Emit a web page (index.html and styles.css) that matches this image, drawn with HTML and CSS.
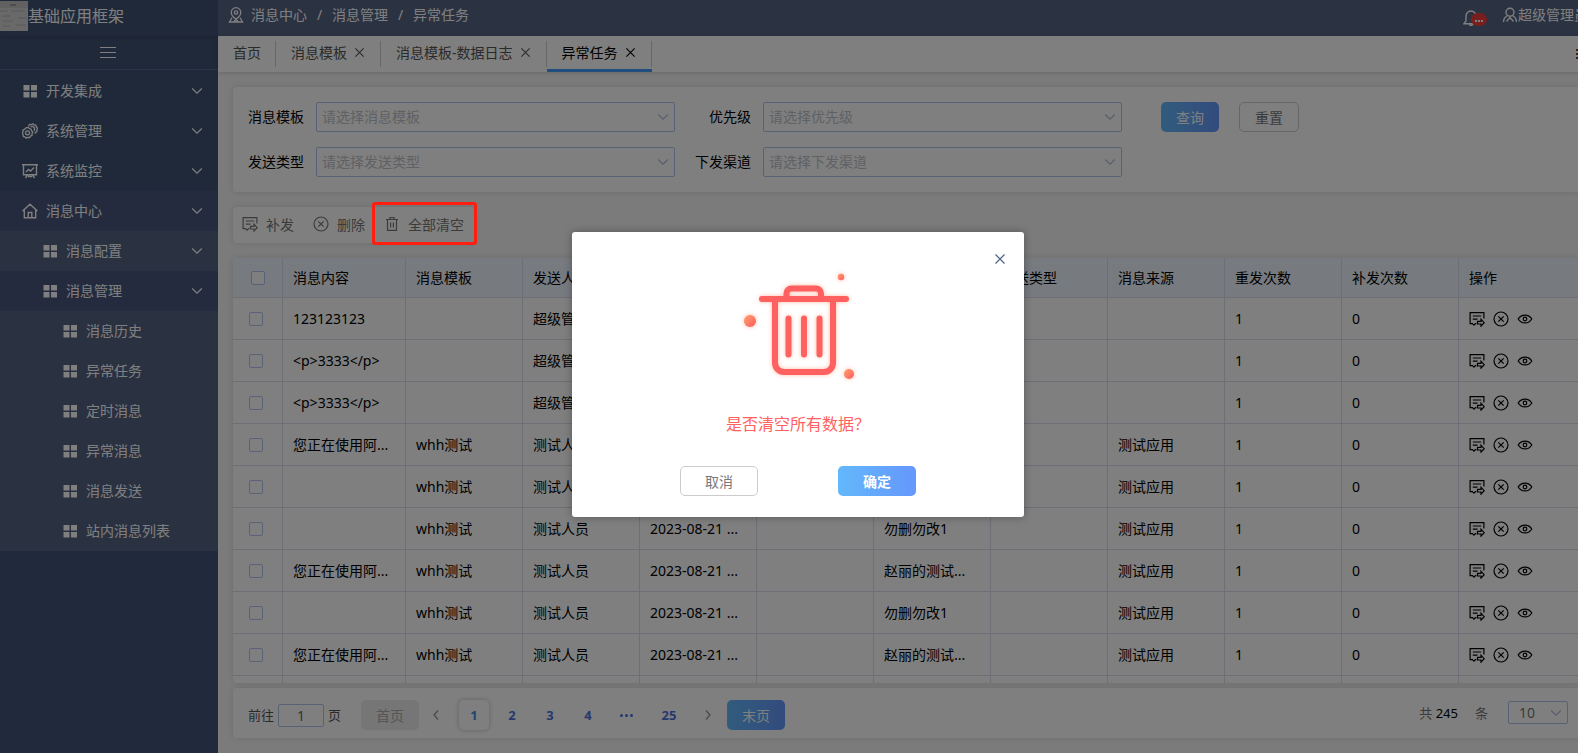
FILE: index.html
```html
<!DOCTYPE html>
<html lang="zh-CN">
<head>
<meta charset="utf-8">
<title>基础应用框架</title>
<link rel="stylesheet" href="styles.css">
</head>
<body>
<svg class="sprite" aria-hidden="true">
  <symbol id="i-grid" viewBox="0 0 16 16"><path fill="currentColor" d="M1.500 2h6v5.500h-6zM9 2h6v5.500H9zM1.500 9h6v5.500h-6zM9 9h6v5.500H9z"/></symbol>
  <symbol id="i-gear" viewBox="0 0 16 16"><g fill="none" stroke="currentColor" stroke-width="1.300" stroke-linejoin="round"><path d="M4.600 4.600l1.700-.2 1.100 1.300 1.700.4.400 1.700 1.300 1.200-.8 1.600.1 1.700-1.600.8-.9 1.500-1.800-.2-1.600.8-1.200-1.300-1.700-.4-.2-1.800-1-1.400.9-1.500-.1-1.700 1.600-.8z"/><circle cx="5.500" cy="9.800" r="2"/><path d="M6.500 3.300L7.500 1.500l1.800.2 1.600-1 1.300 1.300 1.700.2.400 1.800 1.300 1.200-.8 1.600.3 1.700-1.500.9-.8 1.200M8.500 4c1.200-.8 2.700-.6 3.500.5.800 1.100.7 2.500 0 3.500"/></g></symbol>
  <symbol id="i-board" viewBox="0 0 16 16"><g fill="none" stroke="currentColor" stroke-width="1.400"><path d="M0 1.700h16M1.500 1.700v10h13v-10M4 9l2.500-2.500 2 1.500L12 4.500M5.500 12l-2 3M10.500 12l2 3M6 13.500h4"/></g></symbol>
  <symbol id="i-home" viewBox="0 0 16 16"><g fill="none" stroke="currentColor" stroke-width="1.400"><path d="M.6 8L8 1.200 15.400 8M2.300 7v7.800h11.400V7M6.200 14.500V9.500h3.600v5"/></g></symbol>
  <symbol id="i-down" viewBox="0 0 12 12"><path fill="none" stroke="currentColor" stroke-width="1.200" d="M1.200 3.500L6 8.200l4.800-4.700"/></symbol>
  <symbol id="i-left" viewBox="0 0 12 12"><path fill="none" stroke="currentColor" stroke-width="1.400" d="M8 1.500L4 6l4 4.500"/></symbol>
  <symbol id="i-right" viewBox="0 0 12 12"><path fill="none" stroke="currentColor" stroke-width="1.400" d="M4 1.500L8 6l-4 4.500"/></symbol>
  <symbol id="i-x" viewBox="0 0 12 12"><path fill="none" stroke="currentColor" stroke-width="1.200" d="M1.500 1.500l9 9M10.500 1.500l-9 9"/></symbol>
  <symbol id="i-pin" viewBox="0 0 16 16"><g fill="none" stroke="currentColor" stroke-width="1.300"><path d="M8 12.300C5 10 3.200 8 3.200 5.500a4.800 4.800 0 0 1 9.600 0C12.800 8 11 10 8 12.300z"/><circle cx="8" cy="5.500" r="1.700"/><path d="M4 10.500L1.500 15h13L12 10.500M5.500 15L8 12.500l2.500 2.500"/></g></symbol>
  <symbol id="i-bell" viewBox="0 0 16 16"><path fill="none" stroke="currentColor" stroke-width="1.400" d="M.8 13.800h14.400L13 11V6a5 5 0 0 0-10 0v5zM6.500 14.300c.3 1.500 2.700 1.500 3 0"/></symbol>
  <symbol id="i-user" viewBox="0 0 16 16"><path fill="none" stroke="currentColor" stroke-width="1.400" d="M8 1.200a4 4 0 0 1 4 4c0 2.300-1.800 4-4 4s-4-1.700-4-4a4 4 0 0 1 4-4zM5.500 8.500C3 10 1.500 12 1.500 15M10.500 8.500c2.500 1.500 4 3.500 4 6.500M4.500 14.500L8 10.500l3.500 4"/></symbol>
  <symbol id="i-resend" viewBox="0 0 16 16"><path fill="none" stroke="currentColor" stroke-width="1.200" d="M14.900 7.500V1.600H1.100v11h2.400L5 14.200l1.500-1.600h.8M3.800 5h8.400M3.800 8.200h4.700M12 8.200v2.100H8.500v2.700H12v2.100l3.200-3.400z"/></symbol>
  <symbol id="i-cancel" viewBox="0 0 16 16"><g fill="none" stroke="currentColor" stroke-width="1.200"><circle cx="8" cy="8" r="7"/><path d="M5.300 5.300l5.400 5.400M10.700 5.300l-5.400 5.400"/></g></symbol>
  <symbol id="i-eye" viewBox="0 0 16 16"><g fill="none" stroke="currentColor" stroke-width="1.200"><path d="M1.200 8c3.200-5.200 10.400-5.200 13.600 0-3.200 5.200-10.400 5.200-13.600 0z"/><circle cx="8" cy="8" r="1.800"/></g></symbol>
  <symbol id="i-trash" viewBox="0 0 16 16"><path fill="none" stroke="currentColor" stroke-width="1.200" d="M2 3.500h12M6 3.200V1.500h4v1.700M3.500 3.500v10.900h9V3.500M6.600 6.500v5M9.400 6.500v5"/></symbol>
</svg>

<div class="app">
  <aside class="sidebar">
    <div class="brand">
      <svg class="logo" viewBox="0 0 28 30" preserveAspectRatio="none" aria-hidden="true"><rect width="28" height="30" fill="#d2d2d2"/><rect width="28" height="7" fill="#c2c2c2"/><path d="M10 4h6" stroke="#9a9a9a" stroke-width="2"/><path d="M0 10h8M11 10h14M2 15h9M3 20h10M18 17h9M2 25h8M16 24h10" stroke="#b4b4b4"/></svg>
      <span>基础应用框架</span>
    </div>
    <button class="burger" aria-label="折叠菜单"><span></span><span></span><span></span></button>
    <nav class="menu">
      <a class="item" href="#"><svg><use href="#i-grid"/></svg><span>开发集成</span><svg class="arrow"><use href="#i-down"/></svg></a>
      <a class="item" href="#"><svg><use href="#i-gear"/></svg><span>系统管理</span><svg class="arrow"><use href="#i-down"/></svg></a>
      <a class="item" href="#"><svg><use href="#i-board"/></svg><span>系统监控</span><svg class="arrow"><use href="#i-down"/></svg></a>
      <a class="item open" href="#"><svg><use href="#i-home"/></svg><span>消息中心</span><svg class="arrow"><use href="#i-down"/></svg></a>
      <div class="submenu">
        <a class="item level2" href="#"><svg><use href="#i-grid"/></svg><span>消息配置</span><svg class="arrow"><use href="#i-down"/></svg></a>
        <a class="item level2 open" href="#"><svg><use href="#i-grid"/></svg><span>消息管理</span><svg class="arrow"><use href="#i-down"/></svg></a>
        <a class="item level3" href="#"><svg><use href="#i-grid"/></svg><span>消息历史</span></a>
        <a class="item level3" href="#"><svg><use href="#i-grid"/></svg><span>异常任务</span></a>
        <a class="item level3" href="#"><svg><use href="#i-grid"/></svg><span>定时消息</span></a>
        <a class="item level3" href="#"><svg><use href="#i-grid"/></svg><span>异常消息</span></a>
        <a class="item level3" href="#"><svg><use href="#i-grid"/></svg><span>消息发送</span></a>
        <a class="item level3" href="#"><svg><use href="#i-grid"/></svg><span>站内消息列表</span></a>
      </div>
    </nav>
  </aside>

  <div class="main">
    <header class="topbar">
      <nav class="crumbs">
        <svg><use href="#i-pin"/></svg>
        <a href="#">消息中心</a><i>/</i><a href="#">消息管理</a><i>/</i><span>异常任务</span>
      </nav>
      <div class="account">
        <button class="bell" aria-label="通知"><svg><use href="#i-bell"/></svg><span class="badge"><b></b><b></b><b></b></span></button>
        <a class="user" href="#"><svg><use href="#i-user"/></svg>超级管理员</a>
      </div>
    </header>

    <div class="tabs">
      <a class="tab" href="#">首页</a>
      <a class="tab" href="#">消息模板<svg><use href="#i-x"/></svg></a>
      <a class="tab" href="#">消息模板-数据日志<svg><use href="#i-x"/></svg></a>
      <a class="tab active" href="#">异常任务<svg><use href="#i-x"/></svg></a>
      <button class="tabs-more" aria-label="更多"><span></span><span></span><span></span></button>
    </div>

    <main class="content">
      <form class="panel search">
        <label for="f-tpl">消息模板</label>
        <div class="select"><select id="f-tpl"><option>请选择消息模板</option></select><svg><use href="#i-down"/></svg></div>
        <label for="f-pri">优先级</label>
        <div class="select"><select id="f-pri"><option>请选择优先级</option></select><svg><use href="#i-down"/></svg></div>
        <div class="actions"><button type="button" class="btn primary">查询</button><button type="button" class="btn plain">重置</button></div>
        <label for="f-type">发送类型</label>
        <div class="select"><select id="f-type"><option>请选择发送类型</option></select><svg><use href="#i-down"/></svg></div>
        <label for="f-chan">下发渠道</label>
        <div class="select"><select id="f-chan"><option>请选择下发渠道</option></select><svg><use href="#i-down"/></svg></div>
      </form>

      <div class="panel toolbar">
        <button><svg><use href="#i-resend"/></svg>补发</button>
        <button><svg><use href="#i-cancel"/></svg>删除</button>
        <button class="clear-all"><svg><use href="#i-trash"/></svg>全部清空<span class="marker"></span></button>
      </div>

      <div class="panel table-wrap">
        <table>
          <colgroup><col class="c-check"><col class="c-wide"><col><col><col><col><col><col><col><col><col><col class="c-ops"></colgroup>
          <thead>
            <tr><th><input type="checkbox" aria-label="全选"></th><th>消息内容</th><th>消息模板</th><th>发送人</th><th>发送时间</th><th>优先级</th><th>接收人</th><th>发送类型</th><th>消息来源</th><th>重发次数</th><th>补发次数</th><th>操作</th></tr>
          </thead>
          <tbody>
            <tr><td><input type="checkbox" aria-label="选择"></td><td>123123123</td><td></td><td>超级管理员</td><td></td><td></td><td></td><td></td><td></td><td>1</td><td>0</td><td><div class="ops"><button aria-label="补发"><svg><use href="#i-resend"/></svg></button><button aria-label="删除"><svg><use href="#i-cancel"/></svg></button><button aria-label="查看"><svg><use href="#i-eye"/></svg></button></div></td></tr>
            <tr><td><input type="checkbox" aria-label="选择"></td><td>&lt;p&gt;3333&lt;/p&gt;</td><td></td><td>超级管理员</td><td></td><td></td><td></td><td></td><td></td><td>1</td><td>0</td><td><div class="ops"><button aria-label="补发"><svg><use href="#i-resend"/></svg></button><button aria-label="删除"><svg><use href="#i-cancel"/></svg></button><button aria-label="查看"><svg><use href="#i-eye"/></svg></button></div></td></tr>
            <tr><td><input type="checkbox" aria-label="选择"></td><td>&lt;p&gt;3333&lt;/p&gt;</td><td></td><td>超级管理员</td><td></td><td></td><td></td><td></td><td></td><td>1</td><td>0</td><td><div class="ops"><button aria-label="补发"><svg><use href="#i-resend"/></svg></button><button aria-label="删除"><svg><use href="#i-cancel"/></svg></button><button aria-label="查看"><svg><use href="#i-eye"/></svg></button></div></td></tr>
            <tr><td><input type="checkbox" aria-label="选择"></td><td>您正在使用阿...</td><td>whh测试</td><td>测试人员</td><td></td><td></td><td></td><td></td><td>测试应用</td><td>1</td><td>0</td><td><div class="ops"><button aria-label="补发"><svg><use href="#i-resend"/></svg></button><button aria-label="删除"><svg><use href="#i-cancel"/></svg></button><button aria-label="查看"><svg><use href="#i-eye"/></svg></button></div></td></tr>
            <tr><td><input type="checkbox" aria-label="选择"></td><td></td><td>whh测试</td><td>测试人员</td><td></td><td></td><td></td><td></td><td>测试应用</td><td>1</td><td>0</td><td><div class="ops"><button aria-label="补发"><svg><use href="#i-resend"/></svg></button><button aria-label="删除"><svg><use href="#i-cancel"/></svg></button><button aria-label="查看"><svg><use href="#i-eye"/></svg></button></div></td></tr>
            <tr><td><input type="checkbox" aria-label="选择"></td><td></td><td>whh测试</td><td>测试人员</td><td>2023-08-21 ...</td><td></td><td>勿删勿改1</td><td></td><td>测试应用</td><td>1</td><td>0</td><td><div class="ops"><button aria-label="补发"><svg><use href="#i-resend"/></svg></button><button aria-label="删除"><svg><use href="#i-cancel"/></svg></button><button aria-label="查看"><svg><use href="#i-eye"/></svg></button></div></td></tr>
            <tr><td><input type="checkbox" aria-label="选择"></td><td>您正在使用阿...</td><td>whh测试</td><td>测试人员</td><td>2023-08-21 ...</td><td></td><td>赵丽的测试...</td><td></td><td>测试应用</td><td>1</td><td>0</td><td><div class="ops"><button aria-label="补发"><svg><use href="#i-resend"/></svg></button><button aria-label="删除"><svg><use href="#i-cancel"/></svg></button><button aria-label="查看"><svg><use href="#i-eye"/></svg></button></div></td></tr>
            <tr><td><input type="checkbox" aria-label="选择"></td><td></td><td>whh测试</td><td>测试人员</td><td>2023-08-21 ...</td><td></td><td>勿删勿改1</td><td></td><td>测试应用</td><td>1</td><td>0</td><td><div class="ops"><button aria-label="补发"><svg><use href="#i-resend"/></svg></button><button aria-label="删除"><svg><use href="#i-cancel"/></svg></button><button aria-label="查看"><svg><use href="#i-eye"/></svg></button></div></td></tr>
            <tr><td><input type="checkbox" aria-label="选择"></td><td>您正在使用阿...</td><td>whh测试</td><td>测试人员</td><td>2023-08-21 ...</td><td></td><td>赵丽的测试...</td><td></td><td>测试应用</td><td>1</td><td>0</td><td><div class="ops"><button aria-label="补发"><svg><use href="#i-resend"/></svg></button><button aria-label="删除"><svg><use href="#i-cancel"/></svg></button><button aria-label="查看"><svg><use href="#i-eye"/></svg></button></div></td></tr>
            <tr><td></td><td></td><td></td><td></td><td></td><td></td><td></td><td></td><td></td><td></td><td></td><td></td></tr>
          </tbody>
        </table>
      </div>

      <div class="panel pager">
        <div class="jump"><label for="goto">前往</label><input id="goto" type="text" value="1"><span>页</span></div>
        <div class="pages">
          <button class="btn muted" disabled>首页</button>
          <button class="step prev" aria-label="上一页"><svg><use href="#i-left"/></svg></button>
          <button class="num current">1</button>
          <button class="num">2</button>
          <button class="num">3</button>
          <button class="num">4</button>
          <button class="num more" aria-label="更多页"><i></i><i></i><i></i></button>
          <button class="num wide">25</button>
          <button class="step" aria-label="下一页"><svg><use href="#i-right"/></svg></button>
          <button class="btn primary">末页</button>
        </div>
        <div class="total"><span>共 <strong>245</strong></span><span>条</span>
          <div class="select small"><select aria-label="每页条数"><option>10</option></select><svg><use href="#i-down"/></svg></div>
        </div>
      </div>
    </main>
  </div>

  <div class="overlay">
    <section class="dialog" role="dialog" aria-modal="true" aria-labelledby="dlg-text">
      <button class="close" aria-label="关闭"><svg><use href="#i-x"/></svg></button>
      <svg class="bin" viewBox="0 0 120 116" aria-hidden="true">
        <defs><linearGradient id="dot" x1="0" y1="0" x2="1" y2="1"><stop offset="0" stop-color="#ffa070"/><stop offset="1" stop-color="#ff5c5c"/></linearGradient></defs>
        <g fill="none" stroke="#ff6161" stroke-width="6" stroke-linecap="round">
          <path d="M24 31h84M48.500 29v-3.500a5 5 0 0 1 5-5h24.500a5 5 0 0 1 5 5V29M37 32v63a9 9 0 0 0 9 9h40a9 9 0 0 0 9-9V32M50.500 50.500v36M66 50.500v36M81.500 50.500v36"/>
        </g>
        <circle cx="12" cy="53" r="6" fill="url(#dot)"/><circle cx="103" cy="9" r="3.200" fill="url(#dot)"/><circle cx="111" cy="106" r="5" fill="url(#dot)"/>
      </svg>
      <p id="dlg-text">是否清空所有数据<span class="mark">？</span></p>
      <div class="dialog-actions"><button class="btn plain">取消</button><button class="btn primary strong">确定</button></div>
    </section>
  </div>
</div>
</body>
</html>
```

FILE: styles.css
```css
* { box-sizing: border-box; }

html, body { height: 100%; margin: 0; overflow: hidden; }

body, button, input, select {
  font-family: "Noto Sans", "Noto Sans CJK SC", sans-serif;
  font-size: 14px;
}

button { padding: 0; border: 0; background: none; color: inherit; cursor: pointer; }
a { color: inherit; text-decoration: none; }
svg { display: block; flex: none; width: 16px; height: 16px; }
.sprite { position: absolute; width: 0; height: 0; }

/* The shell is wider than the window; its right edge runs off screen. */
.app {
  position: relative;
  display: flex;
  width: calc(100% + 18px);
  height: 100%;
  background: #f6f6f6;
  line-height: 20px;
}

/* Sidebar */
.sidebar { width: 218px; flex: none; background: linear-gradient(#405272, #42547a); color: #fff; }
.brand { display: flex; align-items: center; height: 36px; padding-bottom: 4px; font-size: 16px; box-shadow: 0 1px 3px rgba(0, 0, 0, .2); }
.logo { width: 28px; height: 30px; }
.burger { display: flex; flex-direction: column; align-items: center; justify-content: center; gap: 4px; width: 100%; height: 34px; padding-right: 2px; border-bottom: 1px solid #566b92; }
.burger span { width: 16px; height: 1px; background: #fff; }
.menu { padding-top: 1px; }
.item { display: flex; align-items: center; gap: 8px; height: 40px; padding: 0 15px 0 22px; }
.item .arrow { width: 12px; height: 12px; margin-left: auto; }
.item.open { background: #4a567c; }
.submenu { background: #546282; }
.item.level2 { padding-left: 42px; }
.item.level3 { padding-left: 62px; }

/* Top bar */
.main { display: flex; flex-direction: column; flex: 1; min-width: 0; }
.topbar { display: flex; align-items: center; justify-content: space-between; flex: none; height: 36px; padding: 0 8px 6px 10px; background: #566484; color: #fff; }
.crumbs { display: flex; align-items: center; }
.crumbs svg { margin-right: 7px; }
.crumbs i { width: 25px; text-align: center; font-style: normal; }
.account { display: flex; align-items: center; gap: 15px; }
.bell { position: relative; padding-top: 6px; width: 24px; }
.badge { position: absolute; left: 8px; top: 9px; display: flex; align-items: center; justify-content: center; gap: 1px; width: 16px; height: 13px; border-radius: 7px; background: #f23c3c; }
.badge b { width: 2px; height: 2px; margin-top: 3px; background: #fff; }
.user { display: flex; align-items: center; line-height: 18px; }

/* Tabs */
.tabs { display: flex; flex: none; height: 36px; background: #fff; box-shadow: 0 1px 4px rgba(0, 0, 0, .15); color: #555; }
.tab { position: relative; display: flex; align-items: center; gap: 7px; height: 26px; margin-top: 5px; padding: 0 15px 3px 15px; border-right: 1px solid #d0d0d0; }
.tab:first-child { padding-right: 14px; }
.tab svg { width: 11px; height: 11px; }
.tab.active { color: #000; }
.tab.active::after { content: ""; position: absolute; left: 0; right: -1px; bottom: -5px; height: 3px; background: #409eff; }
.tabs-more { display: flex; flex-direction: column; justify-content: center; gap: 2px; margin-left: auto; width: 20px; }
.tabs-more span { width: 10px; height: 2px; background: #7a3c28; }

/* Content */
.content { display: flex; flex-direction: column; flex: 1; min-height: 0; padding: 15px; }
.panel { border-radius: 4px; background: #fff; box-shadow: 0 0 6px rgba(0, 0, 0, .12); }

.search { display: grid; grid-template-columns: 56px 1fr 64px 1fr 432px; gap: 15px 12px; align-items: center; padding: 15px; }
.search label { text-align: right; white-space: nowrap; }
.actions { display: flex; gap: 20px; padding-left: 27px; }
.select { position: relative; height: 30px; }
.select select { appearance: none; width: 100%; height: 100%; padding: 0 24px 2px 5px; border: 1px solid #b0c4ec; border-radius: 2px; background: #fff; color: #bfc2c8; }
.select svg { position: absolute; right: 6px; top: 9px; width: 12px; height: 12px; color: #b0bcd8; }

.btn { height: 30px; min-width: 58px; padding: 0 15px 1px; border-radius: 5px; }
.primary { background: linear-gradient(90deg, #63b8fb, #6597fb); color: #fff; }
.plain { min-width: 60px; border: 1px solid #ccc; background: #fff; color: #77777c; }
.muted { background: #ececec; color: #aaa; }

.toolbar { display: flex; align-items: center; align-self: flex-start; gap: 19px; height: 36px; margin: 15px 0; padding: 0 10px 2px 9px; color: #777; }
.toolbar button { display: flex; align-items: center; gap: 8px; }
.clear-all { position: relative; }
.marker { position: absolute; z-index: 20; inset: -12px -13px -11px -12px; border: 3px solid #ff1f10; border-radius: 3px; }

/* Table */
.table-wrap { flex: 1; min-height: 0; overflow: hidden; }
table { width: 100%; border-collapse: separate; border-spacing: 0; table-layout: fixed; }
.c-check { width: 50px; }
.c-wide { width: 123px; }
.c-ops { width: 122px; }
th, td { height: 42px; padding: 0 9px 0 10px; border-right: 1px solid #dcdfec; border-bottom: 1px solid #dcdfec; text-align: left; font-weight: 400; white-space: nowrap; }
th { height: 40px; background: #eff5fd; }
th:first-child { padding-left: 18px; }
td:first-child { padding-left: 16px; }
th:last-child, td:last-child { border-right: 0; }
input[type="checkbox"] { appearance: none; display: block; width: 14px; height: 14px; margin: 0; border: 1px solid #b0c4ec; border-radius: 2px; background: #fff; }
.ops { display: flex; gap: 8px; }

/* Pager */
.pager { display: flex; align-items: center; flex: none; margin-top: 5px; padding: 12px 13px 8px 15px; color: #777; }
.jump { display: flex; align-items: center; gap: 4px; margin-right: 20px; font-size: 13px; color: #555; }
.jump input { width: 46px; height: 23px; border: 1px solid #b0c4ec; border-radius: 2px; padding: 0; text-align: center; color: #666; }
.pages { display: flex; align-items: center; gap: 8px; }
.step { display: flex; justify-content: center; width: 22px; color: #999; }
.step svg { width: 12px; height: 12px; }
.prev { width: 18px; margin-right: 6px; }
.num { width: 30px; height: 30px; border-radius: 5px; color: #4a72dc; font-size: 13px; font-weight: 700; }
.num.current { color: #3f8ee0; box-shadow: 0 0 5px rgba(0, 0, 0, .25); }
.more { display: flex; align-items: center; justify-content: center; gap: 2px; }
.more i { width: 3px; height: 3px; border-radius: 50%; background: currentColor; }
.wide { width: 40px; }
.total { display: flex; align-items: center; gap: 17px; margin-left: auto; padding-bottom: 5px; font-size: 13px; }
.total strong { font-weight: 400; color: #000; }
.small { width: 60px; height: 23px; margin-left: 3px; }
.small select { padding: 0 10px; color: #777; }
.small svg { top: 6px; }

/* Confirm dialog */
.overlay { position: absolute; inset: 0; z-index: 10; display: flex; align-items: center; justify-content: center; padding-bottom: 4px; background: rgba(0, 0, 0, .5); }
.dialog { position: relative; display: flex; flex-direction: column; align-items: center; width: 452px; padding: 36px 20px 21px; border-radius: 3px; background: #fff; box-shadow: 0 0 8px rgba(0, 0, 0, .3); }
.close { position: absolute; right: 18px; top: 21px; color: #4e638c; }
.close svg { width: 12px; height: 12px; }
.bin { width: 120px; height: 116px; filter: drop-shadow(0 0 2px rgba(255, 120, 80, .5)); }
.dialog p { margin: 28px 0 30px; color: #ff6161; font-size: 16px; line-height: 24px; }
.mark { font-family: "Noto Sans CJK TC", sans-serif; line-height: 1; }
.dialog-actions { display: flex; gap: 80px; }
.dialog-actions .btn { width: 78px; }
.strong { font-weight: 700; }
```
